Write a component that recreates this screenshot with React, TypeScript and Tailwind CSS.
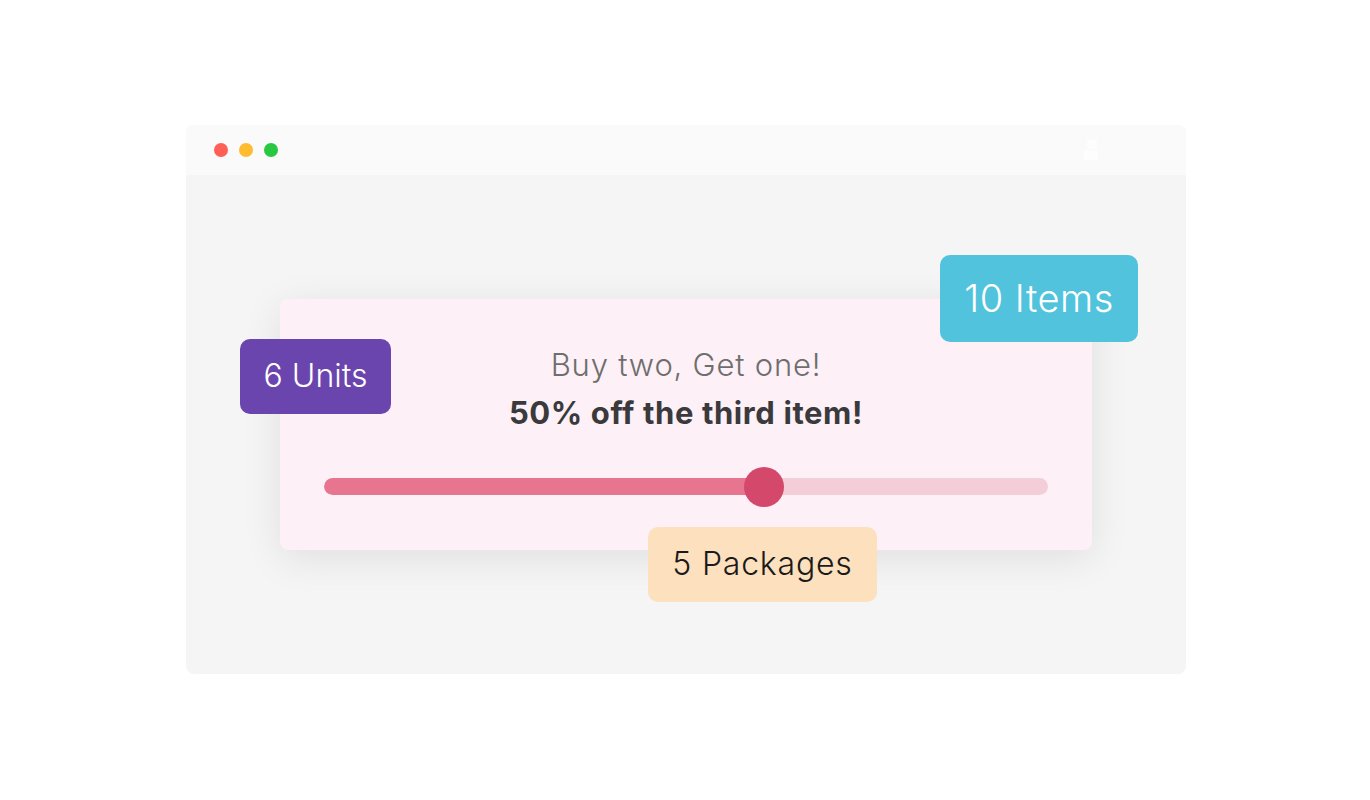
const Badge = ({ className, children }: { className: string; children: React.ReactNode }) => (
  <div className={`absolute flex items-center justify-center rounded-[10px] font-light ${className}`}>{children}</div>
)

const App = () => {
  const value = 0.608
  return (
    <div className="min-h-screen w-full bg-white flex items-center justify-center font-['Inter',sans-serif]">
      {/* Window */}
      <div className="w-[1000px] rounded-lg overflow-hidden bg-[#f5f5f5] mt-[-2px] ml-[2px]">
        {/* Title bar */}
        <div className="h-[50px] bg-[#fafafa] flex items-center px-[28px] gap-[11px]">
          <span className="w-[14px] h-[14px] rounded-full bg-[#fe5f57]" />
          <span className="w-[14px] h-[14px] rounded-full bg-[#febc2e]" />
          <span className="w-[14px] h-[14px] rounded-full bg-[#28c840]" />
          <div className="ml-auto mr-[56px]">
            <svg width="20" height="24" viewBox="0 0 20 24" className="opacity-60">
              <rect x="5" y="2" width="10" height="9" rx="1" fill="#ffffff" />
              <rect x="2" y="12" width="14" height="10" rx="1" fill="#ffffff" />
            </svg>
          </div>
        </div>

        {/* Body */}
        <div className="h-[499px] flex items-center justify-center">
          <div className="relative w-[812px] h-[251px] rounded-lg bg-[#fdf0f6] shadow-[0_8px_40px_rgba(0,0,0,0.09)] px-[44px] pt-[42px]">
            <div className="text-center">
              <p className="text-[31px] leading-[48px] font-light tracking-[0.8px] text-[#6e6e6e]">Buy two, Get one!</p>
              <p className="text-[31px] leading-[48px] font-bold tracking-[0.6px] text-[#3a3a3c]">50% off the third item!</p>
            </div>

            {/* Slider */}
            <div className="relative mt-[30px] h-[40px] flex items-center">
              <div className="w-full h-[17px] rounded-full bg-[#f3cdd8] overflow-hidden">
                <div className="h-full rounded-full bg-[#e8758f]" style={{ width: `${value * 100}%` }} />
              </div>
              <div
                className="absolute top-0 w-[40px] h-[40px] -ml-[20px] rounded-full bg-[#d4496b]"
                style={{ left: `${value * 100}%` }}
              />
            </div>

            <Badge className="left-[-40px] top-[40px] w-[151px] h-[75px] bg-[#6b45ae] text-white text-[32px]">6 Units</Badge>
            <Badge className="left-[660px] top-[-44px] w-[198px] h-[87px] bg-[#52c3dd] text-white text-[38px] tracking-[0.5px]">10 Items</Badge>
            <Badge className="left-[368px] top-[228px] w-[229px] h-[75px] bg-[#fde0bd] text-[#1a1a1a] text-[32px] tracking-[0.8px]">5 Packages</Badge>
          </div>
        </div>
      </div>
    </div>
  )
}

export default App
